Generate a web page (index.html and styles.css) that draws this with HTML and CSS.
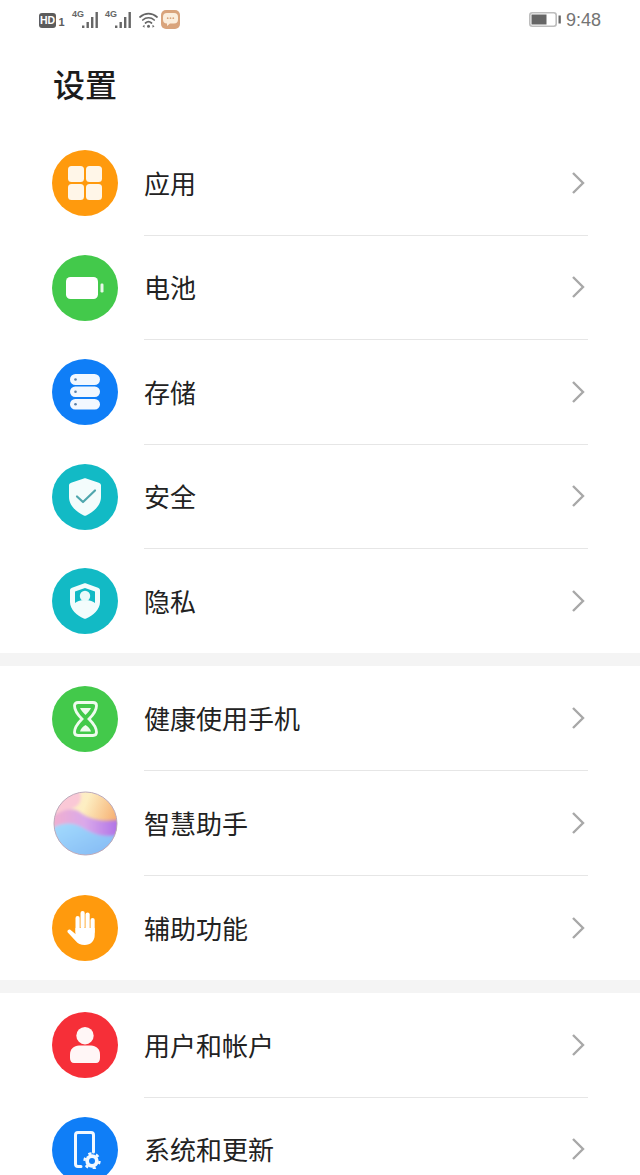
FILE: index.html
```html
<!DOCTYPE html>
<html lang="zh-CN">
<head>
  <meta charset="UTF-8">
  <title>设置</title>
  <link rel="stylesheet" href="styles.css">
</head>
<body>
  <div class="status-bar">
    <div class="status-left">
      <span class="hd-badge">HD</span>
      <span class="sim-num">1</span>
      <span class="signal"><span class="net">4G</span>
        <svg width="16" height="16" viewBox="0 0 16 16"><g fill="#666"><rect x="0" y="13.500" width="2.400" height="2.500"/><rect x="4.500" y="10" width="2.400" height="6"/><rect x="9" y="5" width="2.400" height="11"/><rect x="13.500" y="0" width="2.400" height="16"/></g></svg>
      </span>
      <span class="signal second"><span class="net">4G</span>
        <svg width="16" height="16" viewBox="0 0 16 16"><g fill="#666"><rect x="0" y="13.500" width="2.400" height="2.500"/><rect x="4.500" y="10" width="2.400" height="6"/><rect x="9" y="5" width="2.400" height="11"/><rect x="13.500" y="0" width="2.400" height="16"/></g></svg>
      </span>
      <svg class="wifi" width="19" height="16" viewBox="0 0 19 16"><g fill="none" stroke="#666" stroke-width="1.700" stroke-linecap="round"><path d="M1 5C6 .5 13 .5 18 5"/><path d="M3.800 8C7 5 12 5 15.200 8"/><path d="M6.500 11C8.200 9.500 10.800 9.500 12.500 11"/></g><circle cx="9.500" cy="14.200" r="1.500" fill="#666"/><path d="M5.500 12.700v3l-2-1.500zM13.500 12.700v3l2-1.500z" fill="#666"/></svg>
      <span class="msg-app">
        <svg width="15" height="13" viewBox="0 0 15 13"><path d="M4 0h7a4 4 0 0 1 4 4v2.500a4 4 0 0 1-4 4H7l-3 2.500v-2.500a4 4 0 0 1-4-4V4a4 4 0 0 1 4-4z" fill="#fbeedd"/><g fill="#d9a47c"><circle cx="4.700" cy="5.200" r=".9"/><circle cx="7.500" cy="5.200" r=".9"/><circle cx="10.300" cy="5.200" r=".9"/></g></svg>
      </span>
    </div>
    <div class="status-right">
      <svg width="32" height="15" viewBox="0 0 32 15"><rect x=".8" y=".8" width="26.400" height="13.400" rx="2.500" fill="#fff" stroke="#bdbdbd" stroke-width="1.600"/><rect x="2.500" y="2.500" width="15" height="10" fill="#666"/><rect x="29.500" y="3.500" width="2.300" height="8" fill="#666"/></svg>
      <span class="clock">9:48</span>
    </div>
  </div>

  <h1 class="page-title">设置</h1>

  <section class="group">
    <div class="row">
      <span class="icon orange">
        <svg width="34" height="34" viewBox="0 0 34 34"><g fill="#fff6e8"><rect x="0" y="0" width="16" height="16" rx="3.500"/><rect x="18" y="0" width="16" height="16" rx="3.500"/><rect x="0" y="18" width="16" height="16" rx="3.500"/><rect x="18" y="18" width="16" height="16" rx="3.500"/></g></svg>
      </span>
      <div class="row-body"><span class="label">应用</span><svg class="chevron" width="14" height="24" viewBox="0 0 14 24"><path d="M2 2l10 10L2 22"/></svg></div>
    </div>
    <div class="row">
      <span class="icon green">
        <svg width="38" height="22" viewBox="0 0 38 22"><rect x="0" y="0" width="32" height="22" rx="4.500" fill="#fff"/><rect x="34.500" y="6.500" width="3" height="9" rx="1.200" fill="#e8f8e8"/></svg>
      </span>
      <div class="row-body"><span class="label">电池</span><svg class="chevron" width="14" height="24" viewBox="0 0 14 24"><path d="M2 2l10 10L2 22"/></svg></div>
    </div>
    <div class="row">
      <span class="icon blue">
        <svg width="32" height="36" viewBox="0 0 32 36"><g fill="#f2f8ff"><rect x="1" y="0" width="30" height="11" rx="5.500"/><rect x="1" y="12.500" width="30" height="10.500" rx="5.200"/><rect x="1" y="25" width="30" height="10.500" rx="5.200"/></g><g fill="#5a7fa8"><circle cx="6.500" cy="5.500" r="1.300"/><circle cx="6.500" cy="17.700" r="1.300"/><circle cx="6.500" cy="30.200" r="1.300"/></g></svg>
      </span>
      <div class="row-body"><span class="label">存储</span><svg class="chevron" width="14" height="24" viewBox="0 0 14 24"><path d="M2 2l10 10L2 22"/></svg></div>
    </div>
    <div class="row">
      <span class="icon teal">
        <svg width="32" height="38" viewBox="0 0 32 38"><path d="M14.800.5c.8-.3 1.600-.3 2.400 0l12.600 4.300c1.300.4 2.200 1.500 2.200 2.800V19c0 8.500-7.500 15-14.800 18.500-.8.400-1.600.4-2.400 0C7.500 34 0 27.500 0 19V7.600c0-1.300.9-2.400 2.200-2.800z" fill="#f3fcfc"/><path d="M8 18.500l6 5.500L26 12.500" fill="none" stroke="#4fa6ad" stroke-width="2.200" stroke-linecap="round" stroke-linejoin="round"/></svg>
      </span>
      <div class="row-body"><span class="label">安全</span><svg class="chevron" width="14" height="24" viewBox="0 0 14 24"><path d="M2 2l10 10L2 22"/></svg></div>
    </div>
    <div class="row last">
      <span class="icon teal">
        <svg width="30" height="36" viewBox="0 0 30 36"><path d="M13.800.5c.8-.3 1.600-.3 2.400 0L28 4.800c1.200.4 2 1.500 2 2.800V19c0 7.500-7 13.500-13.800 16.500-.8.400-1.600.4-2.400 0C7 32.500 0 26.500 0 19V7.600c0-1.300.8-2.400 2-2.800z" fill="#f3fcfc"/><path d="M15 5l10 3.600V20c-1.500-1.500-5-3-10-3s-8.500 1.500-10 3V8.600z" fill="#12bac5"/><circle cx="15" cy="13" r="5.200" fill="#eafafa"/></svg>
      </span>
      <div class="row-body"><span class="label">隐私</span><svg class="chevron" width="14" height="24" viewBox="0 0 14 24"><path d="M2 2l10 10L2 22"/></svg></div>
    </div>
  </section>

  <section class="group">
    <div class="row">
      <span class="icon green">
        <svg width="25" height="36" viewBox="0 0 25 36"><path d="M5 1.500h15c2.200 0 3.500 1 3.500 3.200 0 5-3.500 9.300-7.500 13.300 4 4 7.500 8.300 7.500 13.300 0 2.200-1.300 3.200-3.500 3.200H5c-2.200 0-3.500-1-3.500-3.200 0-5 3.500-9.300 7.500-13.300-4-4-7.500-8.300-7.500-13.300C1.500 2.500 2.800 1.500 5 1.500z" fill="none" stroke="#effbef" stroke-width="2.800"/><path d="M7 7h11c-1 2.500-3.200 4.800-5.500 7C10.200 11.800 8 9.500 7 7zM12.500 24c2.500 1.500 4.800 3.500 5.500 6.500H7c.7-3 3-5 5.500-6.500z" fill="#effbef"/></svg>
      </span>
      <div class="row-body"><span class="label">健康使用手机</span><svg class="chevron" width="14" height="24" viewBox="0 0 14 24"><path d="M2 2l10 10L2 22"/></svg></div>
    </div>
    <div class="row">
      <span class="icon assistant">
        <svg width="65" height="65" viewBox="0 0 66 66">
          <defs>
            <clipPath id="ball"><circle cx="33" cy="33" r="32"/></clipPath>
            <filter id="soft" x="-10%" y="-10%" width="120%" height="120%"><feGaussianBlur stdDeviation="1.800"/></filter>
            <linearGradient id="sky" x1="0" y1="0" x2="1" y2="0.400"><stop offset="0" stop-color="#fde6d8"/><stop offset=".5" stop-color="#fdeec2"/><stop offset="1" stop-color="#f6ae70"/></linearGradient>
            <linearGradient id="wave" x1="0" y1="0" x2="1" y2="0"><stop offset="0" stop-color="#f3b0cc"/><stop offset=".5" stop-color="#d9a8ea"/><stop offset="1" stop-color="#ab6ce6"/></linearGradient>
            <linearGradient id="sea" x1="0" y1="0" x2="1" y2="1"><stop offset="0" stop-color="#a4dcfd"/><stop offset="1" stop-color="#7fb4f3"/></linearGradient>
          </defs>
          <g clip-path="url(#ball)">
            <rect width="66" height="66" fill="url(#sky)"/>
            <g filter="url(#soft)">
              <path d="M-4-4H24C32 6 28 16 18 18 8 20 2 22-4 26z" fill="#fac8d6"/>
              <path d="M-4 27C8 20 18 15 28 22 38 29 50 32 70 29V56H-4z" fill="url(#wave)"/>
              <path d="M-4 39C8 32 18 31 28 36 38 42 50 49 70 44V70H-4z" fill="url(#sea)"/>
            </g>
          </g>
          <circle cx="33" cy="33" r="32" fill="none" stroke="#bba9bb" stroke-width="1"/>
        </svg>
      </span>
      <div class="row-body"><span class="label">智慧助手</span><svg class="chevron" width="14" height="24" viewBox="0 0 14 24"><path d="M2 2l10 10L2 22"/></svg></div>
    </div>
    <div class="row last">
      <span class="icon orange">
        <svg width="36" height="36" viewBox="0 0 36 36"><g fill="#fff"><rect x="8.500" y="6" width="4.200" height="18" rx="2.100"/><rect x="13.500" y="1" width="4.200" height="18" rx="2.100"/><rect x="18.500" y="2.500" width="4.200" height="18" rx="2.100"/><rect x="23.500" y="8" width="4.200" height="16" rx="2.100"/><path d="M8.500 18H27.700V25c0 6-4 10-10 10-4 0-7-1.500-9-4L.8 22.500c-1.300-1.700 1-3.800 2.800-2.500L8.500 24z"/></g></svg>
      </span>
      <div class="row-body"><span class="label">辅助功能</span><svg class="chevron" width="14" height="24" viewBox="0 0 14 24"><path d="M2 2l10 10L2 22"/></svg></div>
    </div>
  </section>

  <section class="group">
    <div class="row">
      <span class="icon red">
        <svg width="30" height="36" viewBox="0 0 30 36"><circle cx="15" cy="8.700" r="8.700" fill="#fff6f6"/><path d="M9 18.500h12c5 0 9 3.500 9 9v3.500c0 3-1.500 5-4 5H4c-2.500 0-4-2-4-5v-3.500c0-5.500 4-9 9-9z" fill="#fff6f6"/></svg>
      </span>
      <div class="row-body"><span class="label">用户和帐户</span><svg class="chevron" width="14" height="24" viewBox="0 0 14 24"><path d="M2 2l10 10L2 22"/></svg></div>
    </div>
    <div class="row">
      <span class="icon blue">
        <svg width="32" height="38" viewBox="0 0 32 38"><path d="M12 35.500H9c-1.500 0-2.500-1-2.500-2.500V4c0-1.500 1-2.500 2.500-2.500h13c1.500 0 2.500 1 2.500 2.500v17" fill="none" stroke="#f2f8ff" stroke-width="3" stroke-linecap="round"/><circle cx="23" cy="30" r="6.700" fill="#f2f8ff"/><circle cx="23" cy="30" r="7.500" fill="none" stroke="#f2f8ff" stroke-width="2.400" stroke-dasharray="3.200 4.650"/><circle cx="23" cy="30" r="3" fill="#0f7ef7"/></svg>
      </span>
      <div class="row-body"><span class="label">系统和更新</span><svg class="chevron" width="14" height="24" viewBox="0 0 14 24"><path d="M2 2l10 10L2 22"/></svg></div>
    </div>
  </section>
</body>
</html>
```

FILE: styles.css
```css
* {
  box-sizing: border-box;
}

html,
body {
  height: 100%;
}

body {
  margin: 0;
  background: #f4f4f4;
  font-family: "Noto Sans CJK SC", "Noto Sans", sans-serif;
  color: #222;
  overflow: hidden;
}

.status-bar {
  height: 40px;
  padding: 10px 39px 0;
  display: flex;
  justify-content: space-between;
  align-items: flex-start;
  background: #fff;
}

.status-left {
  height: 19px;
  display: flex;
  align-items: flex-end;
}

.status-right {
  height: 19px;
  display: flex;
  align-items: center;
  gap: 5px;
}

.hd-badge {
  width: 17px;
  height: 15px;
  margin-bottom: 1px;
  border-radius: 3px;
  background: #5c5c5c;
  color: #fff;
  font: bold 10.500px/15px "Liberation Sans", sans-serif;
  text-align: center;
}

.sim-num {
  width: 7px;
  height: 9px;
  margin: 0 7px 2px 2px;
  color: #5c5c5c;
  font: bold 11px/9px "Liberation Sans", sans-serif;
  text-align: center;
}

.signal {
  width: 26px;
  height: 18px;
  margin-bottom: 1px;
  display: flex;
  align-items: flex-end;
  justify-content: flex-end;
  position: relative;
}

.signal.second {
  margin-left: 7px;
}

.net {
  position: absolute;
  top: 0;
  left: 0;
  color: #666;
  font: bold 9px/9px "Liberation Sans", sans-serif;
}

.wifi {
  margin: 0 3px 1px 8px;
}

.msg-app {
  width: 19px;
  height: 19px;
  border-radius: 5px;
  background: #d9a47c;
  display: flex;
  justify-content: center;
  align-items: center;
}

.clock {
  color: #747474;
  font: 18px/20px "Liberation Sans", sans-serif;
}

.page-title {
  height: 90.500px;
  margin: 0;
  padding: 18px 0 0 53px;
  background: #fff;
  font-size: 32px;
  line-height: 50px;
  font-weight: 500;
  color: #1c1c1c;
}

.group {
  background: #fff;
  padding: 0.500px 0 0 52px;
  margin-bottom: 13px;
}

.row {
  height: 104.500px;
  display: flex;
  align-items: center;
  gap: 26px;
}

.row.last {
  height: 104px;
}

.row-body {
  flex: 1;
  height: 100%;
  margin-right: 52px;
  display: flex;
  align-items: center;
  justify-content: space-between;
  border-bottom: 1px solid #e6e6e6;
}

.row.last .row-body {
  border-bottom: none;
}

.label {
  font-size: 26px;
  line-height: 36px;
}

.chevron {
  margin-right: 3px;
}

.chevron path {
  fill: none;
  stroke: #a8a8a8;
  stroke-width: 2.400;
}

.icon {
  width: 66px;
  height: 66px;
  flex: none;
  border-radius: 50%;
  display: flex;
  justify-content: center;
  align-items: center;
}

.orange { background: #ff9a0d; }
.green { background: #43c94b; }
.blue { background: #0f7ef7; }
.teal { background: #12bac5; }
.red { background: #f62f38; }
```
